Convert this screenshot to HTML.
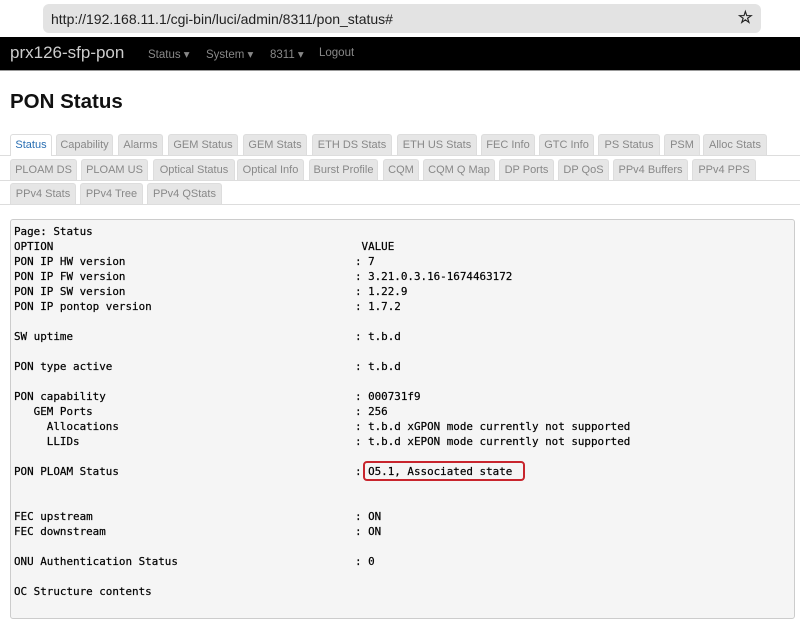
<!DOCTYPE html>
<html><head><meta charset="utf-8"><style>
*{margin:0;padding:0;box-sizing:border-box}
body{width:800px;height:602px;overflow:hidden;background:#fff;font-family:"Liberation Sans",sans-serif;position:relative}
.url{position:absolute;left:43px;top:4px;width:718px;height:29px;background:#e3e3e3;border-radius:6px;font-size:14px;color:#222;padding:7px 0 0 8px}
.star{position:absolute;right:8px;top:4px;font-size:17px;color:#222;font-weight:bold}
.nav{position:absolute;left:0;top:37px;width:800px;height:34px;background:#000;border-bottom:1px solid #999}
.brand{position:absolute;left:10px;top:6px;font-size:17px;color:#ccc}
.ni{position:absolute;top:10px;font-size:11.5px;color:#888}
h1{position:absolute;left:10px;top:90px;font-size:20.5px;font-weight:bold;color:#111}
.t{position:absolute;height:21px;background:#e6e6e6;border:1px solid #ddd;border-bottom:none;border-radius:3px 3px 0 0;font-size:11px;color:#888;text-align:center;line-height:20px;white-space:nowrap}
.a{background:#fff;color:#2a6fb3;border-color:#ddd}
.hl{position:absolute;left:0;width:800px;height:1px;background:#ddd}
.box{position:absolute;left:10px;top:219px;width:785px;height:400px;background:#f5f5f5;border:1px solid #ccc;border-radius:3px}
.ln{position:absolute;left:14px;top:224px;font-family:"DejaVu Sans Mono","Liberation Mono",monospace;font-size:10.9px;color:#000;white-space:pre;line-height:15px;-webkit-text-stroke:0.2px #000}
.v{letter-spacing:0.08px}
.red{position:absolute;left:363px;top:461px;width:162px;height:20px;border:2px solid #c8252d;border-radius:4px}
</style></head><body>
<div class="url">http://192.168.11.1/cgi-bin/luci/admin/8311/pon_status#<span class="star">☆</span></div>
<div class="nav"><span class="brand">prx126-sfp-pon</span>
<span class="ni" style="left:148px">Status ▾</span><span class="ni" style="left:206px">System ▾</span><span class="ni" style="left:270px">8311 ▾</span><span class="ni" style="left:319px">Logout</span></div>
<h1>PON Status</h1>
<div class="hl" style="top:155px"></div>
<div class="hl" style="top:180px"></div>
<div class="hl" style="top:204px"></div>
<div class="t a" style="left:10px;top:134px;width:42px;height:22px">Status</div>
<div class="t" style="left:56px;top:134px;width:57px">Capability</div>
<div class="t" style="left:118px;top:134px;width:45px">Alarms</div>
<div class="t" style="left:168px;top:134px;width:70px">GEM Status</div>
<div class="t" style="left:243px;top:134px;width:64px">GEM Stats</div>
<div class="t" style="left:312px;top:134px;width:80px">ETH DS Stats</div>
<div class="t" style="left:397px;top:134px;width:80px">ETH US Stats</div>
<div class="t" style="left:481px;top:134px;width:54px">FEC Info</div>
<div class="t" style="left:539px;top:134px;width:55px">GTC Info</div>
<div class="t" style="left:598px;top:134px;width:62px">PS Status</div>
<div class="t" style="left:664px;top:134px;width:36px">PSM</div>
<div class="t" style="left:703px;top:134px;width:64px">Alloc Stats</div>
<div class="t" style="left:10px;top:159px;width:67px">PLOAM DS</div>
<div class="t" style="left:81px;top:159px;width:67px">PLOAM US</div>
<div class="t" style="left:153px;top:159px;width:82px">Optical Status</div>
<div class="t" style="left:237px;top:159px;width:67px">Optical Info</div>
<div class="t" style="left:309px;top:159px;width:69px">Burst Profile</div>
<div class="t" style="left:383px;top:159px;width:36px">CQM</div>
<div class="t" style="left:423px;top:159px;width:72px">CQM Q Map</div>
<div class="t" style="left:499px;top:159px;width:55px">DP Ports</div>
<div class="t" style="left:558px;top:159px;width:51px">DP QoS</div>
<div class="t" style="left:613px;top:159px;width:75px">PPv4 Buffers</div>
<div class="t" style="left:692px;top:159px;width:64px">PPv4 PPS</div>
<div class="t" style="left:10px;top:183px;width:66px">PPv4 Stats</div>
<div class="t" style="left:80px;top:183px;width:63px">PPv4 Tree</div>
<div class="t" style="left:147px;top:183px;width:75px">PPv4 QStats</div>
<div class="box"></div>
<div class="ln">Page: Status
OPTION                                               VALUE
PON IP HW version                                   : 7
PON IP FW version                                   : 3.21.0.3.16-1674463172
PON IP SW version                                   : 1.22.9
PON IP pontop version                               : 1.7.2

SW uptime                                           : t.b.d

PON type active                                     : t.b.d

PON capability                                      : 000731f9
   GEM Ports                                        : 256
     Allocations                                    : t.b.d xGPON mode currently not supported
     LLIDs                                          : t.b.d xEPON mode currently not supported

PON PLOAM Status                                    : O5.1, Associated state


FEC upstream                                        : ON
FEC downstream                                      : ON

ONU Authentication Status                           : 0

OC Structure contents</div>
<div class="red"></div>
</body></html>
